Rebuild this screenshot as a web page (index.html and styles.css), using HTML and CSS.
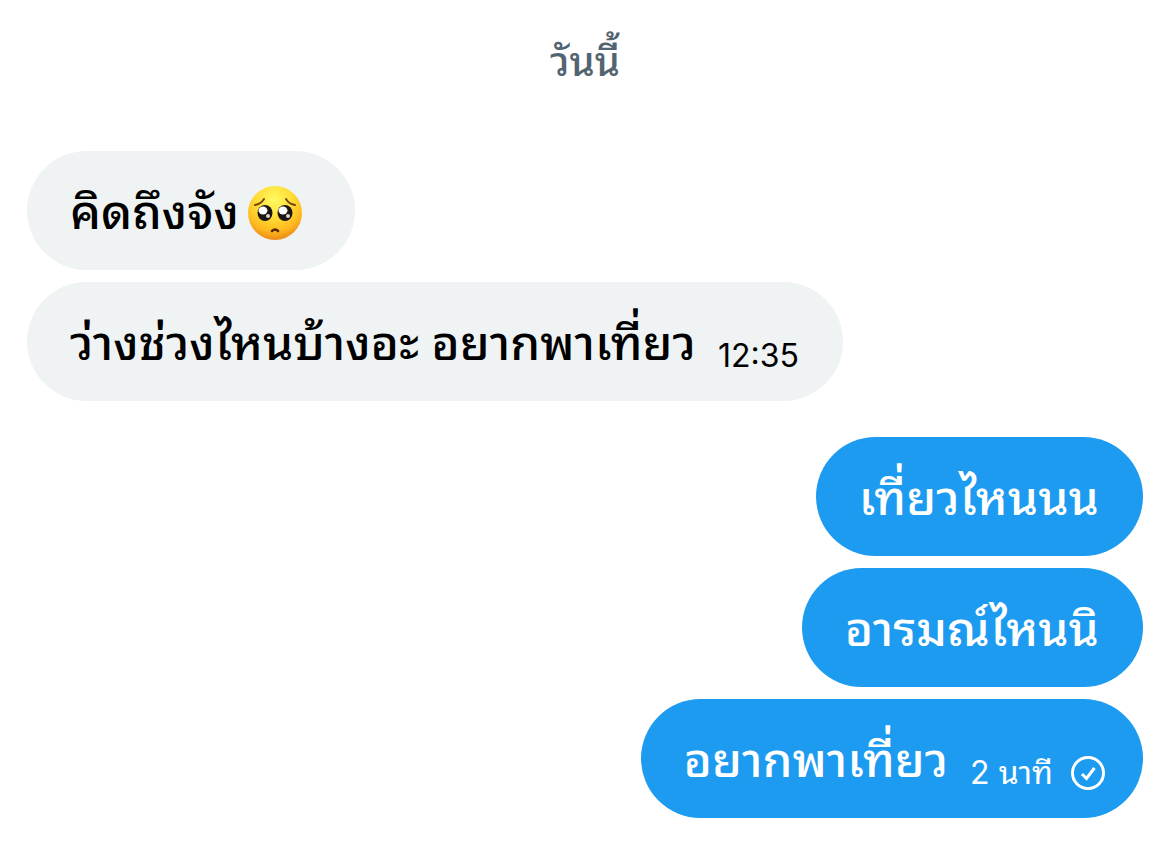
FILE: index.html
```html
<!DOCTYPE html>
<html lang="th">
<head>
    <meta charset="UTF-8">
    <title>Messages</title>
    <link rel="stylesheet" href="styles.css">
</head>
<body>
    <main class="chat">
        <h2 class="day">วันนี้</h2>

        <div class="group received">
            <div class="bubble">
                <p class="text">คิดถึงจัง</p>
                <svg class="emoji" viewBox="0 0 56 56" role="img" aria-label="pleading face">
                    <defs>
                        <radialGradient id="face" cx="48%" cy="26%" r="76%">
                            <stop offset="0" stop-color="#fffa62"/>
                            <stop offset="0.45" stop-color="#ffdc35"/>
                            <stop offset="0.75" stop-color="#ffb91f"/>
                            <stop offset="1" stop-color="#e98518"/>
                        </radialGradient>
                    </defs>
                    <circle cx="28" cy="28" r="27" fill="url(#face)"/>
                    <path d="M8 20q6-1 9-6M48 20q-6-1-9-6" fill="none" stroke="#784807" stroke-width="2" stroke-linecap="round"/>
                    <ellipse cx="18" cy="28" rx="7.5" ry="8" fill="#1d1714"/>
                    <ellipse cx="38" cy="28" rx="7.5" ry="8" fill="#1d1714"/>
                    <ellipse cx="16" cy="25.5" rx="4.5" ry="4" fill="#fff"/>
                    <ellipse cx="36" cy="25.5" rx="4.5" ry="4" fill="#fff"/>
                    <circle cx="21" cy="31" r="2" fill="#d8d5d2"/>
                    <circle cx="41" cy="31" r="2" fill="#d8d5d2"/>
                    <path d="M25 46q3-3 6 0" fill="none" stroke="#50270b" stroke-width="2.5" stroke-linecap="round"/>
                </svg>
            </div>
            <div class="bubble">
                <p class="text">ว่างช่วงไหนบ้างอะ อยากพาเที่ยว</p>
                <time class="time">12:35</time>
            </div>
        </div>

        <div class="group sent">
            <div class="bubble">
                <p class="text">เที่ยวไหนนน</p>
            </div>
            <div class="bubble">
                <p class="text">อารมณ์ไหนนิ</p>
            </div>
            <div class="bubble">
                <p class="text">อยากพาเที่ยว</p>
                <time class="time">2 นาที</time>
                <svg class="check" viewBox="0 0 34 34" role="img" aria-label="Sent">
                    <circle cx="17" cy="17" r="15.5" fill="none" stroke="#fff" stroke-width="3"/>
                    <path d="M11 18l4.5 4.5L23.5 12" fill="none" stroke="#fff" stroke-width="3"/>
                </svg>
            </div>
        </div>
    </main>
</body>
</html>
```
FILE: styles.css
```css
body {
    margin: 0;
    background: #fff;
    color: #000;
    font-family: "Noto Sans Thai Looped", "Noto Sans", sans-serif;
}

.chat {
    padding: 34px 26px 34px 27px;
}

.day {
    margin: 0 0 69px;
    text-align: center;
    color: #536471;
    font-size: 40px;
    line-height: 48px;
    font-weight: 500;
}

.group {
    display: flex;
    flex-direction: column;
    align-items: flex-start;
    gap: 12px;
    margin-bottom: 36px;
}

.sent {
    align-items: flex-end;
    margin-bottom: 0;
}

.bubble {
    display: flex;
    align-items: center;
    min-height: 119px;
    padding: 0 44px 0 43px;
    border-radius: 60px;
    background: #eff3f4;
    box-sizing: border-box;
}

.sent .bubble {
    background: #1d9bf0;
    color: #fff;
}

.text {
    margin: 0 0 6px;
    font-size: 48px;
    line-height: 64px;
    font-weight: 500;
    white-space: nowrap;
}

.emoji {
    width: 56px;
    height: 56px;
    margin: 4px 8px 0;
}

.time {
    margin: 28px 0 0 22px;
    font-family: "Inter", "Noto Sans Thai Looped", sans-serif;
    font-size: 32px;
    line-height: 40px;
    white-space: nowrap;
}

.check {
    width: 34px;
    height: 34px;
    margin: 28px -6px 0 18px;
}
```
